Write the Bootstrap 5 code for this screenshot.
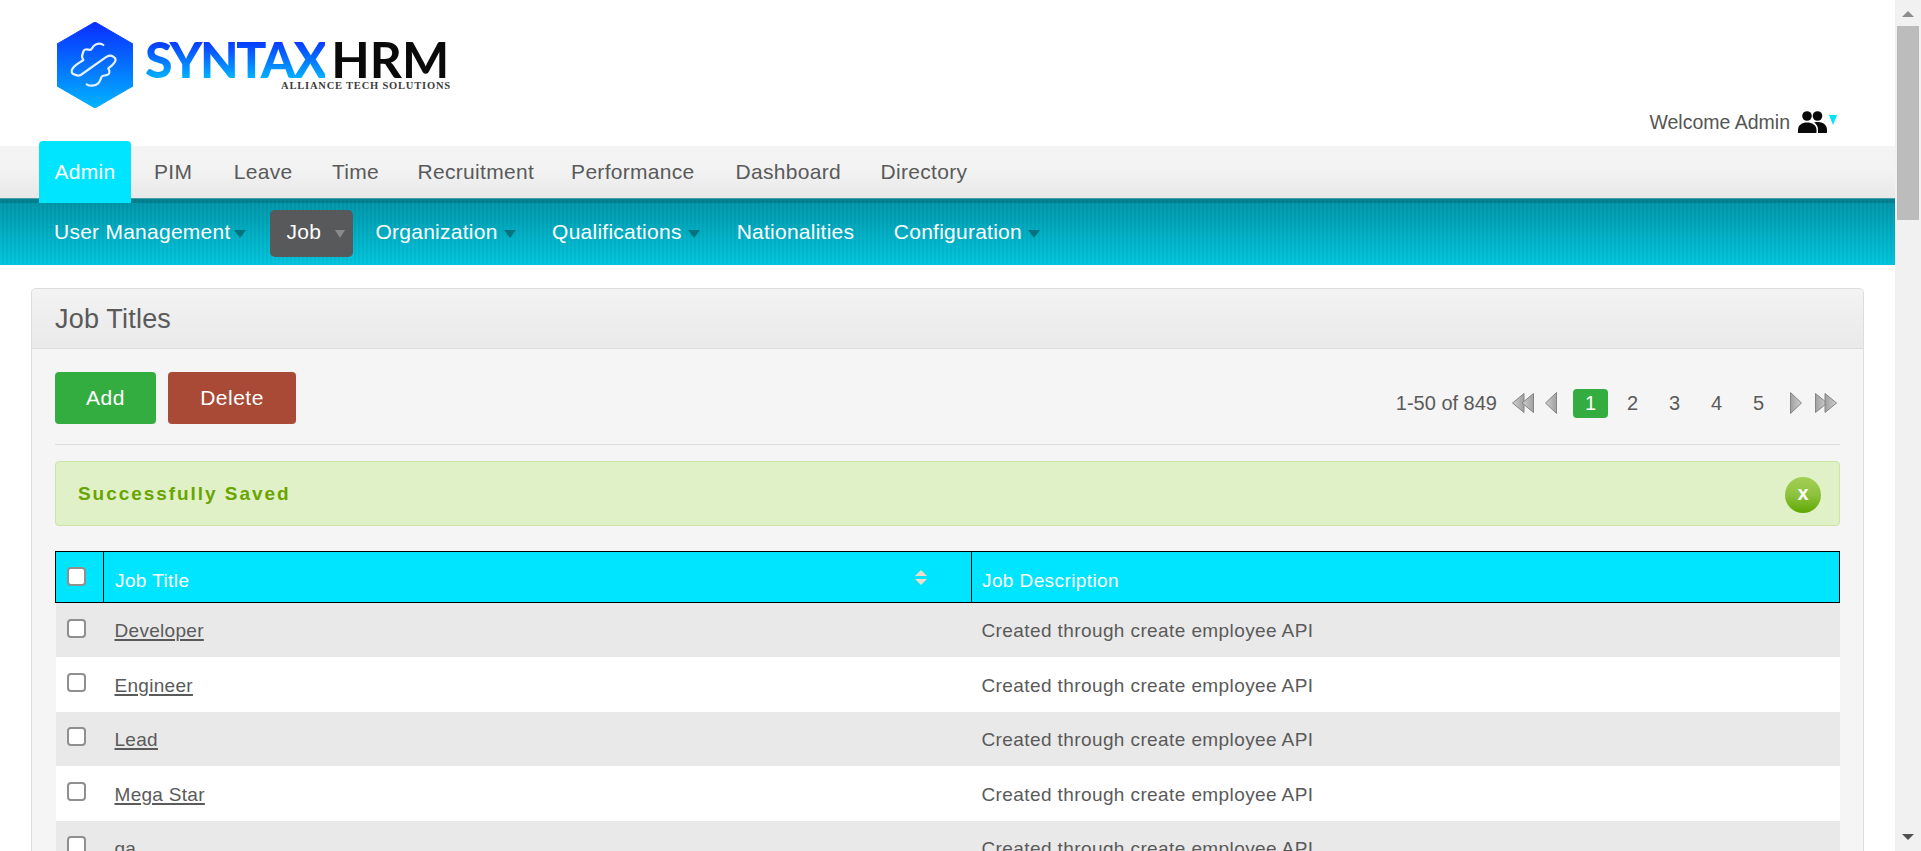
<!DOCTYPE html>
<html lang="en">
<head>
<meta charset="utf-8">
<title>SyntaxHRM</title>
<link href="https://cdn.jsdelivr.net/npm/bootstrap@5.3.0/dist/css/bootstrap.min.css" rel="stylesheet">
<style>
html,body{height:851px;overflow:hidden;}
body{font-family:"Liberation Sans",Arial,sans-serif;color:#5a5a5a;background:#fff;}
.pg-main{width:1895px;height:851px;overflow:hidden;flex:none;}
.pg-scroll{width:26px;height:851px;background:#f1f1f1;flex:none;padding:0 2px;}
.sc-up{height:26px;padding-top:11px;}
.sc-thumb{height:194px;background:#bcbcbc;}
.sc-rest{height:607px;}
.sc-down{height:24px;padding-top:7px;}
.hdr{height:146px;padding:22px 58px 0 57px;}
.logo-mark{width:76px;height:86px;flex:none;}
.logo-words{margin-left:12px;margin-top:14px;line-height:1;}
.logo-top{font-family:Lato,sans-serif;font-size:50px;line-height:46px;letter-spacing:-2.3px;white-space:nowrap;}
.logo-syn{font-weight:900;background:linear-gradient(180deg,#0a2cff 15%,#00b8ff 85%);-webkit-background-clip:text;background-clip:text;color:transparent;}
.logo-hrm{font-weight:700;color:#0a0a0a;margin-left:6px;letter-spacing:.1px;}
.logo-tag{font-family:"Liberation Serif",serif;font-weight:700;font-size:10.5px;letter-spacing:.8px;line-height:10px;color:#3c3c3c;text-align:right;margin:-1px -1.500px 0 0;white-space:nowrap;}
.welcome{font-size:19.5px;padding-bottom:13px;line-height:22px;color:#555;}
.wel-caret{margin-left:2px;}
.main-nav{height:52px;background:linear-gradient(180deg,#f4f4f4 0%,#f2f2f2 50%,#e8e8e8 100%);padding-left:39px;position:relative;z-index:2;}
.mn-item{font-size:21px;letter-spacing:.3px;color:#5a5a5a;padding:0 15px;margin-right:9px;line-height:52px;text-decoration:none;white-space:nowrap;}
.mn-item:nth-child(1){margin-right:8px;}
.mn-item:nth-child(2){margin-right:11.500px;}
.mn-item:nth-child(3){margin-right:9.500px;}
.mn-item:nth-child(4){margin-right:8.500px;}
.mn-item:nth-child(5){margin-right:7px;}
.mn-item:nth-child(6){margin-right:11px;}
.mn-item:nth-child(7){margin-right:9.500px;}
.mn-item.on{background:#00e5ff;color:#fff;border-radius:4px 4px 0 0;width:92px;text-align:center;height:62px;line-height:62px;margin-top:-5px;}
.sub-nav{height:67px;padding:11px 0 0 39px;background:
 repeating-linear-gradient(90deg,rgba(255,255,255,.025) 0 2px,rgba(0,0,0,.02) 2px 4px),
 linear-gradient(180deg,#007e8e 0,#007e8e 4px,#0095a8 4px,#00c4dc 100%);border-top:1px solid #4a9fa9;}
.sn-item{font-size:21px;letter-spacing:.25px;color:#fff;text-decoration:none;white-space:nowrap;height:47px;padding:0 0 3px 15px;display:flex;align-items:center;}
.sn-item:nth-child(1){margin-right:24px;}
.sn-item:nth-child(2){margin-right:8px;}
.sn-item:nth-child(3){margin-right:21.500px;}
.sn-item:nth-child(4){margin-right:22px;}
.sn-item:nth-child(5){margin-right:24.500px;}
.sn-item.on{background:#58595b;border-radius:5px;padding-left:17px;width:83px;}
.sn-caret{display:inline-block;flex:none;width:0;height:0;border-left:6px solid transparent;border-right:6px solid transparent;border-top:8px solid #00737f;margin-left:6px;margin-top:4px;}
.sn-item:nth-child(1) .sn-caret{margin-left:3px;}
.sn-item.on .sn-caret{border-top-color:#8a8a8a;border-left-width:5px;border-right-width:5px;margin-left:14px;}
.panel-box{margin:23px 31px 0 31px;background:#f5f5f5;border:1px solid #ddd;border-bottom:0;border-radius:5px 5px 0 0;height:700px;}
.panel-head{height:60px;background:linear-gradient(180deg,#f3f3f3,#e9e9e9);border-bottom:1px solid #ddd;padding-left:23px;font-size:27px;letter-spacing:.2px;line-height:60px;color:#5a5a5a;border-radius:5px 5px 0 0;}
.panel-body{padding:23px 23px 0;}
.tool-row{height:73px;border-bottom:1px solid #ddd;}
.act-btn{font-size:21px;letter-spacing:.5px;color:#fff;border-radius:4px;height:52px;line-height:52px;padding:0;border:0;}
.act-add{background:#33ad40;width:101px;margin-right:12px;}
.act-del{background:#a94a36;width:128px;}
.pg-tools{margin-right:3px;margin-top:16px;}
.pg-info{font-size:20px;margin-right:15px;}
.pg-num{font-size:20px;width:35px;height:29px;line-height:29px;text-align:center;margin-right:7px;color:#5a5a5a;text-decoration:none;}
.pg-num.on{background:#33ad40;color:#fff;border-radius:4px;}
.pg-ico{display:block;flex:none;}
.gap-first{margin-right:11px;}
.gap-prev{margin-right:16px;}
.gap-next{margin-left:7px;margin-right:13px;}
.ok-box{margin-top:16px;height:65px;background:#e0f1c8;border:1px solid #cbe4a8;border-radius:4px;padding:2px 18px 0 22px;}
.ok-text{color:#6aa400;font-weight:700;font-size:19px;letter-spacing:1.95px;}
.ok-x{width:36px;height:36px;border-radius:50%;background:linear-gradient(180deg,#a4cf55 0%,#8cc23e 50%,#5fa800 100%);color:#fff;font-weight:700;font-size:20px;line-height:32px;text-align:center;}
.job-tbl{table-layout:fixed;width:1785px;margin-top:25px;border-collapse:collapse;}
.job-tbl th{background:#00e5ff;color:#fff;font-weight:400;font-size:19px;letter-spacing:.4px;border:1px solid #000;height:51px;padding:9px 10px 0;position:relative;vertical-align:middle;}
.job-tbl th:nth-child(2){padding-left:11px;}
.job-tbl td{height:54.500px;font-size:19px;letter-spacing:.4px;padding:3px 10px 0;vertical-align:middle;color:#5a5a5a;border:0;}
.job-tbl tbody tr:nth-child(odd) td{background:#e9e9e9;}
.job-tbl tbody tr:nth-child(even) td{background:#fff;}
.job-tbl a{color:#5a5a5a;text-decoration:underline;text-decoration-thickness:2px;text-underline-offset:2px;letter-spacing:.3px;}
.job-tbl td:nth-child(2){padding-left:11px;}
.chk{appearance:none;-webkit-appearance:none;display:block;width:19px;height:19px;border:2px solid #8f8f8f;border-radius:4px;background:#fff;margin:0 0 0 1px;}
td .chk{margin-top:-7px;}
th .chk{margin-top:-10px;}
.col-chk{width:48px;}
.col-name{width:868px;}
.sort-ico{position:absolute;right:44px;top:18px;}
</style>
</head>
<body class="d-flex">
<div class="pg-main">
  <header class="hdr d-flex justify-content-between">
    <div class="d-flex align-items-start">
      <svg class="logo-mark" viewBox="0 0 76 86" aria-label="logo">
        <defs><linearGradient id="hx" x1="0" y1="0" x2="0" y2="1"><stop offset="0" stop-color="#0a2cff"/><stop offset="1" stop-color="#00b4ff"/></linearGradient></defs>
        <path d="M38 0 76 22V64L38 86 0 64V22Z" fill="url(#hx)" stroke="url(#hx)" stroke-width="1" stroke-linejoin="round"/>
        <path d="M46.300 23C44 21 40 21 37 23.700 35.500 25 35 27.500 33 28 30 27 26.500 27 26.300 30 25.500 33 23.500 34 26.300 38 22 41 18 43 15.700 46.300 13.500 49.500 15 52 17 52.300 19 53.500 21.500 54 23.700 53L49.700 34.700C52 33.500 54.500 33.500 56.300 34.700 58.500 36 59 38 58 39.700 56.500 42.500 54 44.500 51.300 46.300 53 49 52.500 52 51.300 52.300 49 54 46 53 44.700 54.700 43.500 57 43 60 41.300 61.300 38 64 33 64.500 29.700 62.300" fill="none" stroke="#e8f2ff" stroke-width="2.200" stroke-linecap="round" stroke-linejoin="round"/>
      </svg>
      <div class="logo-words">
        <div class="logo-top"><span class="logo-syn">SYNTAX</span><span class="logo-hrm">HRM</span></div>
        <div class="logo-tag">ALLIANCE TECH SOLUTIONS</div>
      </div>
    </div>
    <div class="welcome d-flex align-items-end">
      <span>Welcome Admin</span>
      <svg class="ms-2" width="29" height="22" viewBox="0 0 29 22" aria-hidden="true"><circle cx="9" cy="5" r="4.800" fill="#0a0a0a"/><circle cx="19.500" cy="5" r="4.800" fill="#0a0a0a"/><path d="M0 22V19C0 14 4 11.500 9 11.500S18.500 14 18.500 19V22Z" fill="#0a0a0a"/><path d="M16 11.500C17.500 11 19 11 20 11 25 11 29 14 29 18.500V22H20V18.500C20 15.500 18.500 13 16 11.500Z" fill="#0a0a0a"/></svg>
      <svg class="wel-caret mb-2" width="8" height="10" viewBox="0 0 8 10" aria-hidden="true"><path d="M0 0H8L4 10Z" fill="#00e5ff"/></svg>
    </div>
  </header>
  <nav class="main-nav d-flex align-items-start">
    <a class="mn-item on" href="#">Admin</a>
    <a class="mn-item" href="#">PIM</a>
    <a class="mn-item" href="#">Leave</a>
    <a class="mn-item" href="#">Time</a>
    <a class="mn-item" href="#">Recruitment</a>
    <a class="mn-item" href="#">Performance</a>
    <a class="mn-item" href="#">Dashboard</a>
    <a class="mn-item" href="#">Directory</a>
  </nav>
  <nav class="sub-nav d-flex align-items-start">
    <a class="sn-item" href="#">User Management<i class="sn-caret"></i></a>
    <a class="sn-item on" href="#">Job<i class="sn-caret"></i></a>
    <a class="sn-item" href="#">Organization<i class="sn-caret"></i></a>
    <a class="sn-item" href="#">Qualifications<i class="sn-caret"></i></a>
    <a class="sn-item" href="#">Nationalities</a>
    <a class="sn-item" href="#">Configuration<i class="sn-caret"></i></a>
  </nav>
  <section class="panel-box">
    <div class="panel-head">Job Titles</div>
    <div class="panel-body">
      <div class="tool-row d-flex justify-content-between align-items-start">
        <div class="d-flex">
          <button class="btn act-btn act-add" type="button">Add</button>
          <button class="btn act-btn act-del" type="button">Delete</button>
        </div>
        <div class="pg-tools d-flex align-items-center">
          <span class="pg-info">1-50 of 849</span>
          <svg class="pg-ico gap-first" width="22" height="22" viewBox="0 0 22 22" aria-hidden="true"><defs><linearGradient id="pgl" x1="0" y1="0" x2="1" y2="0"><stop offset="0" stop-color="#cfcfcf"/><stop offset="1" stop-color="#a0a0a0"/></linearGradient><linearGradient id="pgr" x1="0" y1="0" x2="1" y2="0"><stop offset="0" stop-color="#a0a0a0"/><stop offset="1" stop-color="#cfcfcf"/></linearGradient></defs><path d="M12 1.500V20.500L.5 11Z" fill="url(#pgl)" stroke="#858585"/><path d="M21.500 1.500V20.500L10 11Z" fill="url(#pgl)" stroke="#858585"/></svg>
          <svg class="pg-ico gap-prev" width="12" height="22" viewBox="0 0 12 22" aria-hidden="true"><path d="M11.500 .5V21.500L.5 11Z" fill="url(#pgl)" stroke="#858585"/></svg>
          <a class="pg-num on" href="#">1</a>
          <a class="pg-num" href="#">2</a>
          <a class="pg-num" href="#">3</a>
          <a class="pg-num" href="#">4</a>
          <a class="pg-num" href="#">5</a>
          <svg class="pg-ico gap-next" width="12" height="22" viewBox="0 0 12 22" aria-hidden="true"><path d="M.5 .5V21.500L11.500 11Z" fill="url(#pgr)" stroke="#858585"/></svg>
          <svg class="pg-ico" width="22" height="22" viewBox="0 0 22 22" aria-hidden="true"><path d="M.5 1.500V20.500L12 11Z" fill="url(#pgr)" stroke="#858585"/><path d="M10 1.500V20.500L21.500 11Z" fill="url(#pgr)" stroke="#858585"/></svg>
        </div>
      </div>
      <div class="ok-box d-flex justify-content-between align-items-center">
        <span class="ok-text">Successfully Saved</span>
        <span class="ok-x">x</span>
      </div>
      <table class="job-tbl">
        <colgroup><col class="col-chk"><col class="col-name"><col></colgroup>
        <thead>
          <tr><th><input class="chk" type="checkbox" aria-label="all"></th><th>Job Title<svg class="sort-ico" width="12" height="15" viewBox="0 0 12 15" aria-hidden="true"><path d="M6 0 12 6H0Z" fill="#f0dcc4"/><path d="M6 15 12 9H0Z" fill="#f0dcc4"/></svg></th><th>Job Description</th></tr>
        </thead>
        <tbody>
          <tr><td><input class="chk" type="checkbox" aria-label="select"></td><td><a href="#">Developer</a></td><td>Created through create employee API</td></tr>
          <tr><td><input class="chk" type="checkbox" aria-label="select"></td><td><a href="#">Engineer</a></td><td>Created through create employee API</td></tr>
          <tr><td><input class="chk" type="checkbox" aria-label="select"></td><td><a href="#">Lead</a></td><td>Created through create employee API</td></tr>
          <tr><td><input class="chk" type="checkbox" aria-label="select"></td><td><a href="#">Mega Star</a></td><td>Created through create employee API</td></tr>
          <tr><td><input class="chk" type="checkbox" aria-label="select"></td><td><a href="#">qa</a></td><td>Created through create employee API</td></tr>
        </tbody>
      </table>
    </div>
  </section>
</div>
<aside class="pg-scroll">
  <div class="sc-up"><svg class="d-block mx-auto" width="12" height="6" viewBox="0 0 12 6" aria-hidden="true"><path d="M6 0 12 6H0Z" fill="#8c8c8c"/></svg></div>
  <div class="sc-thumb"></div>
  <div class="sc-rest"></div>
  <div class="sc-down"><svg class="d-block mx-auto" width="12" height="6" viewBox="0 0 12 6" aria-hidden="true"><path d="M0 0H12L6 6Z" fill="#505050"/></svg></div>
</aside>
<script src="https://cdn.jsdelivr.net/npm/bootstrap@5.3.0/dist/js/bootstrap.bundle.min.js"></script>
</body>
</html>
